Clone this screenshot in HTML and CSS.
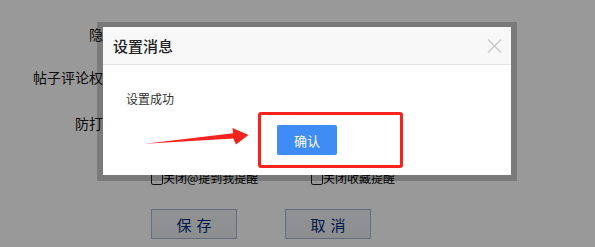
FILE: index.html
```html
<html>
	<head>
	<meta charset="utf-8">
	<title>设置</title>
	<link rel="stylesheet" href="styles.css">
	</head>
	<body>
	<div class="page">
		<div class="row r1"><span class="label">隐私</span></div>
		<div class="row r2"><span class="label">帖子评论权限</span></div>
		<div class="row r3"><span class="label">防打扰</span></div>
		<div class="row r4">
			<label class="check"><span class="box"></span>关闭@提到我提醒</label>
			<label class="check"><span class="box"></span>关闭收藏提醒</label>
		</div>
		<div class="row actions">
			<button class="btn">保存</button>
			<button class="btn">取消</button>
		</div>
	</div>

	<div class="shade"></div>

	<div class="dialog">
		<div class="dialog_head">
			<span class="dialog_title">设置消息</span>
			<svg class="close" width="15" height="14" viewBox="0 0 15 14">
				<path d="M1 0.5 L14 13.5 M14 0.5 L1 13.5" stroke="#c9c9c9" stroke-width="1.4" fill="none"/>
			</svg>
		</div>
		<div class="dialog_body">设置成功</div>
		<div class="dialog_foot">
			<button class="ok">确认</button>
		</div>
	</div>

	<!-- annotation -->
	<div class="mark"></div>
	<svg class="arrow" width="595" height="247" viewBox="0 0 595 247">
		<polygon points="145,143.8 233,133.3 232.5,128 248.5,135 236,144.6 233.3,138.6" fill="#f5231d"/>
	</svg>
	</body>
</html>
```

FILE: styles.css
```css
body{
	margin: 0;
	background: #fff;
	font-family: "Noto Sans CJK SC", "Liberation Sans", sans-serif;
	color: #000;
}
.page{padding-top: 26px;}
.row{display: flex; align-items: flex-start;}
.r1{height: 43px;}
.r2{height: 46px;}
.r3{height: 56px;}
.r4{height: 38px; padding-left: 151px;}
.label{
	width: 117px;
	text-align: right;
	font-size: 14px;
	line-height: 16px;
	color: #111;
}
.check{
	display: flex;
	align-items: center;
	font-size: 12px;
	line-height: 14px;
	width: 160px;
	color: #000;
}
.box{
	width: 10px; height: 11px;
	border: 1px solid #222;
	border-radius: 2px;
}
.actions{padding-left: 151px; gap: 48px;}
.btn{
	width: 86px; height: 30px;
	border: 1px solid #a9b8d6;
	background: linear-gradient(#f2f4f7, #e9ecf0);
	color: #002a7a;
	font-family: "Noto Sans CJK SC", sans-serif;
	font-size: 15px;
	letter-spacing: 5px;
	padding: 0 0 0 5px;
}

.shade{
	position: fixed;
	left: 0; top: 0; right: 0; bottom: 0;
	background: rgba(0, 0, 0, .4);
}

.dialog{
	position: absolute;
	left: 97px; top: 22px;
	width: 408px;
	height: 148px;
	border: 6px solid rgba(0, 0, 0, .2);
	border-top-width: 5px;
	background: #fff;
	background-clip: padding-box;
}
.dialog_head{
	height: 37px;
	background: #f8f8f8;
	border-bottom: 1px solid #e4e4e4;
	display: flex;
	align-items: center;
	justify-content: space-between;
	padding: 0 9px 0 10px;
}
.dialog_title{font-size: 15px; line-height: 18px; color: #222; font-weight: 500;}
.close{margin-top: 1px;}
.dialog_body{
	padding: 26px 0 0 23px;
	height: 34px;
	font-size: 12px;
	line-height: 16px;
	color: #333;
}
.dialog_foot{text-align: center;}
.ok{
	width: 60px; height: 30px;
	border: 0;
	border-radius: 2px;
	background: #3f8cf5;
	color: #fff;
	font-family: "Noto Sans CJK SC", sans-serif;
	font-size: 13px;
	padding: 0;
}

.mark{
	position: absolute;
	left: 258px; top: 112px;
	width: 139px; height: 50px;
	border: 3px solid #f5231d;
	border-radius: 3px;
}
.arrow{position: absolute; left: 0; top: 0;}
```
